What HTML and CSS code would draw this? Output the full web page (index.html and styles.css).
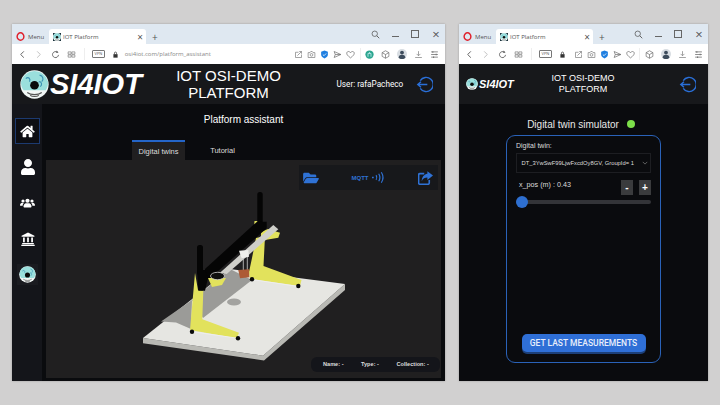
FILE: index.html
```html
<!DOCTYPE html>
<html lang="en">
<head>
    <meta charset="UTF-8">
    <meta name="viewport" content="width=device-width, initial-scale=1.0">
    <title>IOT Platform</title>
    <link rel="stylesheet" href="styles.css">
</head>
<body>
    <!-- shared icons -->
    <svg class="defs" width="0" height="0">
        <symbol id="i-logo" viewBox="0 0 40 40">
            <circle cx="20" cy="20" r="19.5" fill="#f2f7f6"/>
            <path d="M1.5 16a19 19 0 0 1 37 0c.6 5-1 9-3 12H5c-2.500-3-4-7-3.500-12z" fill="#9adfdc"/>
            <path d="M8 12c4-4 7 1 5 4M27 7c5 1 6 6 3 9M26 16c4 0 5 4 2 7" fill="none" stroke="#3d93b5" stroke-width="1.600"/>
            <path d="M10 31c5 4 15 4 20 0M14 35c3 2 9 2 12 0" fill="none" stroke="#555" stroke-width="1.500"/>
            <circle cx="20" cy="21" r="6" fill="#0b0b0b"/>
        </symbol>
        <symbol id="i-logout" viewBox="0 0 24 24">
            <path d="M6 6.500A10 10 0 1 1 6 17.500" fill="none" stroke="currentColor" stroke-width="2"/>
            <path d="M16 12H3M7 8l-4.500 4L7 16" fill="none" stroke="currentColor" stroke-width="2"/>
        </symbol>
        <symbol id="i-opera" viewBox="0 0 16 16">
            <ellipse cx="8" cy="8" rx="6" ry="6.500" fill="none" stroke="#e0202c" stroke-width="2.600"/>
        </symbol>
        <symbol id="i-search" viewBox="0 0 12 12">
            <circle cx="5" cy="5" r="3.600" fill="none" stroke="#555" stroke-width="1"/>
            <path d="M7.700 7.700L11 11" stroke="#555" stroke-width="1.200"/>
        </symbol>
        <symbol id="i-back" viewBox="0 0 10 10"><path d="M6.500 1.500L3 5l3.500 3.500" fill="none" stroke="currentColor" stroke-width="1"/></symbol>
        <symbol id="i-fwd" viewBox="0 0 10 10"><path d="M3.500 1.500L7 5 3.500 8.500" fill="none" stroke="currentColor" stroke-width="1"/></symbol>
        <symbol id="i-reload" viewBox="0 0 12 12">
            <path d="M10 6.500A4 4 0 1 1 8.500 3" fill="none" stroke="#555" stroke-width="1.100"/>
            <path d="M7.500 .8l2.500 2.400-3 .8z" fill="#555"/>
        </symbol>
        <symbol id="i-grid" viewBox="0 0 12 12">
            <path d="M1.500 2.500h4v3h-4zM6.500 2.500h4v3h-4zM1.500 6.500h4v3h-4zM6.500 6.500h4v3h-4z" fill="none" stroke="#777" stroke-width=".9"/>
        </symbol>
        <symbol id="i-lock" viewBox="0 0 10 10">
            <path d="M2 4.500h6v5H2z" fill="#333"/>
            <path d="M3.500 4.500V3a1.500 1.500 0 0 1 3 0v1.500" fill="none" stroke="#333"/>
        </symbol>
        <symbol id="i-snap" viewBox="0 0 12 12">
            <path d="M2 10V3h4M2 10h8V6M4.500 7.500L10 2M7 2h3v3" fill="none" stroke="#777" stroke-width=".9"/>
        </symbol>
        <symbol id="i-cam" viewBox="0 0 12 12">
            <path d="M1.500 3.500h2.500l1-1.500h2l1 1.500h2.500v6.500h-9z" fill="none" stroke="#777" stroke-width=".9"/>
            <circle cx="6" cy="6.500" r="1.800" fill="none" stroke="#777" stroke-width=".9"/>
        </symbol>
        <symbol id="i-shield" viewBox="0 0 12 12">
            <path d="M6 .8l4.500 1.500v4c0 2.500-2.500 4-4.500 5-2-1-4.500-2.500-4.500-5v-4z" fill="#1f7fe0"/>
            <path d="M3.800 6l1.600 1.600 2.800-3" fill="none" stroke="#fff" stroke-width="1"/>
        </symbol>
        <symbol id="i-send" viewBox="0 0 12 12">
            <path d="M1.500 2l9 4-9 4 1.500-4zM3 6h7" fill="none" stroke="#666" stroke-width=".9"/>
        </symbol>
        <symbol id="i-heart" viewBox="0 0 12 12">
            <path d="M6 10.500C2 7.500 1 6 1 4.300 1 2.800 2.200 2 3.400 2 4.500 2 5.500 2.700 6 3.600 6.500 2.700 7.500 2 8.600 2 9.800 2 11 2.800 11 4.300 11 6 10 7.500 6 10.500z" fill="none" stroke="#666" stroke-width=".9"/>
        </symbol>
        <symbol id="i-ext" viewBox="0 0 12 12">
            <circle cx="6" cy="6" r="5.500" fill="#2ba58f"/>
            <path d="M4 9V4.500h4V9M6 4.500V2.800" fill="none" stroke="#c9eef0" stroke-width="1.100"/>
        </symbol>
        <symbol id="i-cube" viewBox="0 0 12 12">
            <path d="M6 1l4.500 2.500v5L6 11 1.500 8.500v-5zM1.500 3.500L6 6l4.500-2.500M6 6v5" fill="none" stroke="#666" stroke-width=".9"/>
        </symbol>
        <symbol id="i-avatar" viewBox="0 0 12 12">
            <circle cx="6" cy="6" r="6" fill="#d8dde2"/>
            <circle cx="6" cy="4.300" r="2.300" fill="#3d4c5c"/>
            <path d="M1.800 10.500C2.300 7.800 4 7 6 7s3.700.8 4.200 3.500A6 6 0 0 1 1.800 10.500z" fill="#3d4c5c"/>
        </symbol>
        <symbol id="i-down" viewBox="0 0 12 12">
            <path d="M6 1.500v6M3.500 5.200L6 7.700l2.500-2.500M1.500 10h9" fill="none" stroke="#777" stroke-width=".9"/>
        </symbol>
        <symbol id="i-menu" viewBox="0 0 12 12">
            <path d="M1.500 2.500h9M1.500 6h9M1.500 9.500h9" fill="none" stroke="#777" stroke-width="1.100"/>
            <path d="M3 1.500h1.500v2H3zM7.500 5h1.500v2H7.500zM4 8.500h1.500v2H4z" fill="#777"/>
        </symbol>
        <symbol id="i-home" viewBox="0 0 576 512">
            <path d="M280.37 148.26L96 300.11V464a16 16 0 0 0 16 16l112.06-.29a16 16 0 0 0 15.92-16V368a16 16 0 0 1 16-16h64a16 16 0 0 1 16 16v95.64a16 16 0 0 0 16 16.05L464 480a16 16 0 0 0 16-16V300L295.67 148.26a12.19 12.19 0 0 0-15.3 0zM571.6 251.47L488 182.56V44.05a12 12 0 0 0-12-12h-56a12 12 0 0 0-12 12v72.61L318.47 43a48 48 0 0 0-61 0L4.34 251.47a12 12 0 0 0-1.6 16.9l25.5 31A12 12 0 0 0 45.15 301l235.22-193.74a12.19 12.19 0 0 1 15.3 0L530.9 301a12 12 0 0 0 16.9-1.6l25.5-31a12 12 0 0 0-1.7-16.93z" fill="currentColor"/>
        </symbol>
        <symbol id="i-user" viewBox="0 0 448 512">
            <path d="M224 256c70.7 0 128-57.3 128-128S294.7 0 224 0 96 57.3 96 128s57.3 128 128 128zm89.6 32h-16.7c-22.2 10.2-46.9 16-72.9 16s-50.6-5.800-72.9-16h-16.7C60.200 288 0 348.200 0 422.400V464c0 26.500 21.500 48 48 48h352c26.500 0 48-21.500 48-48v-41.600c0-74.200-60.200-134.400-134.400-134.400z" fill="currentColor"/>
        </symbol>
        <symbol id="i-users" viewBox="0 0 30 20">
            <g fill="currentColor">
                <circle cx="6" cy="6" r="3.200"/><circle cx="24" cy="6" r="3.200"/><circle cx="15" cy="5.500" r="4.200"/>
                <path d="M0 15c0-3.500 2-5.500 4.500-5.500 1.300 0 2.300.4 3 1-1.500 1.300-2.300 3-2.300 5H1.500C.6 15.500 0 15.500 0 15zM30 15c0-3.500-2-5.500-4.500-5.500-1.300 0-2.300.4-3 1 1.500 1.300 2.300 3 2.300 5h3.700c.9 0 1.500 0 1.500-.5z"/>
                <path d="M7 17c0-4 2.500-6.500 5-6.500h6c2.500 0 5 2.500 5 6.500 0 1.500-1 2-2 2H9c-1 0-2-.5-2-2z"/>
            </g>
        </symbol>
        <symbol id="i-bank" viewBox="0 0 24 24">
            <g fill="currentColor">
                <path d="M12 1L1 6.500V8h22V6.500z"/>
                <path d="M3.500 9.500h3v8h-3zM10.500 9.500h3v8h-3zM17.500 9.500h3v8h-3z"/>
                <path d="M2 19h20v1.800H2zM.5 22h23v2H.5z"/>
            </g>
        </symbol>
        <symbol id="i-folder" viewBox="0 0 576 512">
            <path d="M572.694 292.093L500.27 416.248A63.997 63.997 0 0 1 444.989 448H45.025c-18.523 0-30.064-20.093-20.731-36.093l72.424-124.155A64 64 0 0 1 152 256h399.964c18.523 0 30.064 20.093 20.73 36.093zM152 224h328v-48c0-26.51-21.49-48-48-48H272l-64-64H48C21.49 64 0 85.49 0 112v278.046l69.077-118.418C86.214 242.25 117.989 224 152 224z" fill="currentColor"/>
        </symbol>
        <symbol id="i-waves" viewBox="0 0 24 20">
            <path d="M0 10h3" stroke="currentColor" stroke-width="2.500"/>
            <path d="M7 6c1.500 2.500 1.500 5.500 0 8M11.500 3.500c2.500 4 2.500 9 0 13M16 1c3.500 5.500 3.500 12.500 0 18" fill="none" stroke="currentColor" stroke-width="2"/>
        </symbol>
        <symbol id="i-share" viewBox="0 0 24 22">
            <path d="M10 4H3a2 2 0 0 0-2 2v13a2 2 0 0 0 2 2h13a2 2 0 0 0 2-2v-5" fill="none" stroke="currentColor" stroke-width="2.600"/>
            <path d="M15 0l9 7-9 7V10c-4 0-7 1-9 6 0-6 3-11 9-12z" fill="currentColor"/>
        </symbol>
    </svg>

    <div class="desktop">
        <!-- desktop window -->
        <div class="window window-wide">
            <div class="tabbar">
                <div class="tab-menu"><svg class="ico"><use href="#i-opera"/></svg><span>Menu</span></div>
                <div class="tab-active">
                    <svg class="favicon"><use href="#i-logo"/></svg>
                    <span>IOT Platform</span>
                    <span class="tab-close">×</span>
                </div>
                <span class="tab-plus">+</span>
                <div class="win-controls">
                    <svg class="ico"><use href="#i-search"/></svg>
                    <span class="win-min"></span>
                    <span class="win-max"></span>
                    <span class="win-close">×</span>
                </div>
            </div>
            <div class="toolbar">
                <svg class="ico nav-dark"><use href="#i-back"/></svg>
                <svg class="ico nav-light"><use href="#i-fwd"/></svg>
                <svg class="ico"><use href="#i-reload"/></svg>
                <svg class="ico"><use href="#i-grid"/></svg>
                <span class="sep"></span>
                <span class="vpn">VPN</span>
                <svg class="ico lock"><use href="#i-lock"/></svg>
                <span class="url">osi4iot.com/platform_assistant</span>
                <div class="tool-right">
                    <div class="tool-group">
                        <svg class="ico"><use href="#i-snap"/></svg>
                        <svg class="ico"><use href="#i-cam"/></svg>
                        <svg class="ico"><use href="#i-shield"/></svg>
                        <svg class="ico"><use href="#i-send"/></svg>
                        <svg class="ico"><use href="#i-heart"/></svg>
                    </div>
                    <span class="sep"></span>
                    <div class="tool-group tool-group-wide">
                        <svg class="ico"><use href="#i-ext"/></svg>
                        <svg class="ico"><use href="#i-cube"/></svg>
                        <svg class="ico ico-avatar"><use href="#i-avatar"/></svg>
                        <svg class="ico"><use href="#i-down"/></svg>
                        <svg class="ico"><use href="#i-menu"/></svg>
                    </div>
                </div>
            </div>
            <header class="app-header">
                <div class="brand">
                    <svg class="brand-disc"><use href="#i-logo"/></svg>
                    <span class="brand-name">SI4IOT</span>
                </div>
                <div class="app-title">IOT OSI-DEMO<br>PLATFORM</div>
                <div class="user-name">User: rafaPacheco</div>
                <svg class="logout"><use href="#i-logout"/></svg>
            </header>
            <div class="app-body">
                <nav class="sidebar">
                    <a class="side-item side-active"><svg class="side-home"><use href="#i-home"/></svg></a>
                    <a class="side-item"><svg class="side-user"><use href="#i-user"/></svg></a>
                    <a class="side-item"><svg class="side-users"><use href="#i-users"/></svg></a>
                    <a class="side-item"><svg class="side-bank"><use href="#i-bank"/></svg></a>
                    <a class="side-item side-logo"><svg class="side-disc"><use href="#i-logo"/></svg></a>
                </nav>
                <main class="main">
                    <h1 class="main-title">Platform assistant</h1>
                    <div class="tabs">
                        <div class="tab tab-on">Digital twins</div>
                        <div class="tab">Tutorial</div>
                    </div>
                    <div class="scene">
                        <!-- viewBox is in page pixels -->
                        <svg class="scene-svg" viewBox="46 160 395 218">
                            <!-- plate -->
                            <polygon points="143,338 263,355.7 345,284 345,290 264,360.5 143,343.3" fill="#b9b9b4"/>
                            <polygon points="143,338 263,355.7 345,284 230,269" fill="#e6e6e2"/>
                            <!-- shadows -->
                            <polygon points="161,321.5 192,300 191,329 176,322.5" fill="#9b9b98"/>
                            <polygon points="192,300 230,269 252,280 203,318" fill="#9b9b98"/>
                            <ellipse cx="234" cy="302" rx="7" ry="3.5" fill="#a3a3a0"/>
                            <!-- back stand -->
                            <polygon points="254.5,221 258,221 258,230 254,227" fill="#e2e25c"/>
                            <polygon points="261,232 268,229 280,232.7 278.3,237.7 265,240 261,236" fill="#e2e25c"/>
                            <polygon points="256,238 265,236 263.5,266 301.5,280 300,286 250,279 249,272 252,258" fill="#e2e25c"/>
                            <line x1="252" y1="279.5" x2="298" y2="286.5" stroke="#eee"/>
                            <!-- back post and beam -->
                            <rect x="257.3" y="192" width="5.4" height="32" rx="2.5" fill="#050505"/>
                            <polygon points="205,269 257,221.7 266.7,221.7 266.7,228.3 210,278.3 205,281" fill="#050505"/>
                            <!-- bracket and pulley at the near end -->
                            <polygon points="208,278 226,278 222,285 212,287" fill="#e2e25c"/>
                            <ellipse cx="217.5" cy="276" rx="7" ry="3.7" fill="#0f0f0f" stroke="#cfcfcf" stroke-width=".8"/>
                            <!-- rail -->
                            <polygon points="220,272.7 273.3,225 278.3,229.3 226.7,274" fill="#cfcfca"/>
                            <!-- carriage and brick -->
                            <polygon points="239,250.7 248.3,250 249,256.7 241.7,258.3" fill="#efefec"/>
                            <line x1="243.3" y1="258" x2="243.3" y2="270.5" stroke="#cfcfcf" stroke-width=".8"/>
                            <line x1="247.3" y1="257" x2="247.3" y2="270" stroke="#cfcfcf" stroke-width=".8"/>
                            <polygon points="238.3,270 249,269.3 249.3,277.3 240,278.3" fill="#ad5a35"/>
                            <!-- front stand -->
                            <polygon points="195,273 198,290 203.3,290.7 202.3,319.3 239,332.7 236.7,338.3 190,330" fill="#e2e25c"/>
                            <line x1="192" y1="331.7" x2="238" y2="338.3" stroke="#eee"/>
                            <!-- front post -->
                            <rect x="197" y="245" width="6" height="30" rx="2.5" fill="#050505"/>
                            <polygon points="197,270 205,270 208,278 205,290.7 198.3,290.7" fill="#050505"/>
                            <!-- feet -->
                            <circle cx="192" cy="331.7" r="2.2" fill="#0a0a0a"/>
                            <circle cx="238" cy="338.3" r="2.2" fill="#0a0a0a"/>
                            <circle cx="252" cy="279.3" r="2.2" fill="#0a0a0a"/>
                            <circle cx="298.3" cy="286" r="2.2" fill="#0a0a0a"/>
                        </svg>
                        <div class="scene-tools">
                            <svg class="tool-folder"><use href="#i-folder"/></svg>
                            <div class="tool-mqtt"><span>MQTT</span><svg class="tool-waves"><use href="#i-waves"/></svg></div>
                            <svg class="tool-share"><use href="#i-share"/></svg>
                        </div>
                        <div class="scene-info">
                            <span>Name: -</span>
                            <span>Type: -</span>
                            <span>Collection: -</span>
                        </div>
                    </div>
                </main>
            </div>
        </div>

        <!-- mobile window -->
        <div class="window window-narrow">
            <div class="tabbar">
                <div class="tab-menu"><svg class="ico"><use href="#i-opera"/></svg><span>Menu</span></div>
                <div class="tab-active">
                    <svg class="favicon"><use href="#i-logo"/></svg>
                    <span>IOT Platform</span>
                    <span class="tab-close">×</span>
                </div>
                <span class="tab-plus">+</span>
                <div class="win-controls">
                    <svg class="ico"><use href="#i-search"/></svg>
                    <span class="win-min"></span>
                    <span class="win-max"></span>
                    <span class="win-close">×</span>
                </div>
            </div>
            <div class="toolbar">
                <svg class="ico nav-dark"><use href="#i-back"/></svg>
                <svg class="ico nav-light"><use href="#i-fwd"/></svg>
                <svg class="ico"><use href="#i-reload"/></svg>
                <svg class="ico"><use href="#i-grid"/></svg>
                <span class="sep"></span>
                <span class="vpn">VPN</span>
                <svg class="ico lock"><use href="#i-lock"/></svg>
                <div class="tool-right">
                    <div class="tool-group">
                        <svg class="ico"><use href="#i-snap"/></svg>
                        <svg class="ico"><use href="#i-cam"/></svg>
                        <svg class="ico"><use href="#i-shield"/></svg>
                        <svg class="ico"><use href="#i-send"/></svg>
                        <svg class="ico"><use href="#i-heart"/></svg>
                    </div>
                    <span class="sep"></span>
                    <div class="tool-group tool-group-wide">
                        <svg class="ico"><use href="#i-cube"/></svg>
                        <svg class="ico ico-avatar"><use href="#i-avatar"/></svg>
                        <svg class="ico"><use href="#i-down"/></svg>
                        <svg class="ico"><use href="#i-menu"/></svg>
                    </div>
                </div>
            </div>
            <header class="app-header app-header-small">
                <div class="brand">
                    <svg class="brand-disc"><use href="#i-logo"/></svg>
                    <span class="brand-name">SI4IOT</span>
                </div>
                <div class="app-title">IOT OSI-DEMO<br>PLATFORM</div>
                <svg class="logout"><use href="#i-logout"/></svg>
            </header>
            <div class="sim-body">
                <div class="sim-heading">
                    <span>Digital twin simulator</span>
                    <span class="sim-dot"></span>
                </div>
                <section class="sim-panel">
                    <div class="sim-label">Digital twin:</div>
                    <div class="sim-select">
                        <span>DT_3YwSwF99LjwFxcdOy8GV, GroupId= 1</span>
                        <svg class="sim-chevron" viewBox="0 0 8 5"><path d="M1 1l3 3 3-3" fill="none" stroke="#999" stroke-width=".8"/></svg>
                    </div>
                    <div class="sim-row">
                        <span>x_pos (m) : 0.43</span>
                        <div class="sim-steps">
                            <span class="step">-</span>
                            <span class="step">+</span>
                        </div>
                    </div>
                    <div class="slider"><span class="slider-thumb"></span></div>
                    <button class="sim-button">GET LAST MEASUREMENTS</button>
                </section>
            </div>
        </div>
    </div>
</body>
</html>
```

FILE: styles.css
```css
body {
    margin: 0;
    background-color: #d1d0d0;
    font-family: "Liberation Sans", Arial, sans-serif;
    color: #fff;
}
.defs {
    display: block;
    height: 0;
}
.desktop {
    display: flex;
    gap: 14px;
    padding: 24px 12px;
    height: 357px;
}
.window {
    display: flex;
    flex-direction: column;
    background-color: #0a0b0e;
    box-shadow: 0 0 2px rgba(0, 0, 0, 0.25);
}
.window-wide {
    width: 433px;
}
.window-narrow {
    width: 249px;
}

/* browser chrome */
.tabbar {
    display: flex;
    align-items: flex-end;
    height: 20px;
    background-color: #dfe8f1;
    font-family: "Open Sans", sans-serif;
    font-size: 6px;
    color: #555;
}
.tab-menu {
    display: flex;
    align-items: center;
    gap: 3px;
    width: 37px;
    height: 15px;
    padding-left: 4px;
    box-sizing: border-box;
}
.tab-active {
    display: flex;
    align-items: center;
    gap: 2px;
    width: 97px;
    height: 15px;
    padding: 0 3px 0 4px;
    box-sizing: border-box;
    background-color: #fff;
    border-radius: 3px 3px 0 0;
}
.favicon {
    width: 8px;
    height: 8px;
    background-color: #17303a;
}
.tab-close {
    margin-left: auto;
    font-size: 10px;
    line-height: 10px;
}
.tab-plus {
    margin-left: 6px;
    align-self: center;
    padding-top: 6px;
    font-size: 10px;
}
.win-controls {
    display: flex;
    align-items: center;
    gap: 9px;
    margin-left: auto;
    height: 20px;
    padding-right: 4px;
}
.win-min {
    width: 7px;
    height: 1px;
    margin: 4px 0 0 3px;
    background-color: #666;
}
.win-max {
    width: 6px;
    height: 6px;
    margin: 0 3px;
    border: 1px solid #666;
}
.win-close {
    font-size: 13px;
    line-height: 13px;
    width: 10px;
    text-align: center;
}
.ico {
    flex: none;
    width: 9px;
    height: 9px;
}
.toolbar {
    display: flex;
    align-items: center;
    gap: 7.4px;
    height: 20px;
    padding-left: 6px;
    background-color: #fff;
    font-family: "Open Sans", sans-serif;
    color: #555;
}
.nav-light {
    color: #bbb;
}
.sep {
    flex: none;
    width: 1px;
    height: 12px;
    background-color: #eee;
}
.vpn {
    flex: none;
    width: 11px;
    height: 6px;
    border: 1px solid #777;
    border-radius: 1px;
    font-size: 4px;
    line-height: 6px;
    text-align: center;
}
.lock {
    width: 7px;
    height: 7px;
}
.url {
    margin-left: -2px;
    font-size: 6px;
    color: #888;
}
.tool-right {
    display: flex;
    align-items: center;
    gap: 4.5px;
    margin-left: auto;
    padding-right: 6px;
}
.tool-group {
    display: flex;
    align-items: center;
    gap: 4px;
}
.tool-group-wide {
    gap: 7px;
}
.ico-avatar {
    width: 10px;
    height: 10px;
}

/* app header */
.app-header {
    display: flex;
    align-items: center;
    height: 40px;
    padding: 0 12px 0 8px;
    background-color: #17181b;
    flex: none;
}
.brand {
    display: flex;
    align-items: center;
    gap: 1px;
    width: 135.5px;
}
.brand-disc {
    width: 29px;
    height: 29px;
}
.brand-name {
    font-size: 29px;
    font-weight: bold;
    font-style: italic;
    line-height: 30px;
}
.app-title {
    width: 146px;
    font-size: 15px;
    line-height: 17px;
    text-align: center;
}
.user-name {
    margin-left: 35px;
    font-family: Roboto, sans-serif;
    font-size: 8.2px;
    white-space: nowrap;
}
.logout {
    width: 17px;
    height: 17px;
    margin-left: auto;
    color: #2a6fd8;
}
.app-header-small .brand {
    width: 50px;
}
.app-header-small {
    padding: 0 12px 0 7px;
}
.app-header-small .brand-disc {
    width: 12px;
    height: 12px;
}
.app-header-small .brand-name {
    font-size: 11px;
}
.app-header-small .app-title {
    width: 120px;
    margin-left: 7px;
    font-size: 9px;
    line-height: 11px;
}

/* platform assistant */
.app-body {
    display: flex;
    flex: 1;
    min-height: 0;
}
.sidebar {
    display: flex;
    flex-direction: column;
    gap: 10px;
    width: 30px;
    padding: 14px 0 0 3px;
    box-sizing: border-box;
    background-color: #14151a;
}
.side-item {
    display: flex;
    align-items: center;
    justify-content: center;
    width: 25px;
    height: 26px;
    color: #fff;
    box-sizing: border-box;
}
.side-active {
    border: 1px solid #1c3a70;
    background-color: #0d0e13;
}
.side-home {
    width: 15px;
    height: 13px;
}
.side-user {
    width: 14px;
    height: 16px;
}
.side-users {
    width: 15px;
    height: 10px;
}
.side-bank {
    width: 14px;
    height: 14px;
}
.side-logo {
    width: 21px;
    height: 21px;
    margin: 2px 0 0 2px;
    background-color: #1a1b20;
}
.side-disc {
    width: 17px;
    height: 17px;
}
.main {
    display: flex;
    flex-direction: column;
    flex: 1;
    min-width: 0;
    padding: 0 4px 3px;
}
.main-title {
    margin: 9px 0 0;
    font-size: 10px;
    font-weight: normal;
    line-height: 14px;
    text-align: center;
}
.tabs {
    display: flex;
    margin: 13px 0 0 86px;
    font-family: "Liberation Sans", sans-serif;
    font-size: 7.5px;
    color: #ddd;
}
.tab {
    width: 53px;
    height: 20px;
    line-height: 21px;
    text-align: center;
    box-sizing: border-box;
}
.tab + .tab {
    margin-left: 11px;
}
.tab-on {
    border-top: 2px solid #2465c8;
    line-height: 19px;
    background-color: #201f20;
}
.scene {
    position: relative;
    flex: 1;
    background-color: #201f20;
    overflow: hidden;
}
.scene-svg {
    display: block;
    width: 100%;
    height: 100%;
}
.scene-tools {
    position: absolute;
    top: 5px;
    right: 3px;
    display: flex;
    align-items: center;
    justify-content: space-between;
    width: 139px;
    height: 25px;
    padding: 0 5px 0 4px;
    box-sizing: border-box;
    background-color: #17181b;
    color: #2f72d6;
}
.tool-folder {
    width: 16px;
    height: 14px;
}
.tool-mqtt {
    display: flex;
    align-items: center;
    gap: 3px;
    font-size: 6px;
    font-weight: bold;
}
.tool-waves {
    width: 14px;
    height: 13px;
}
.tool-share {
    width: 15px;
    height: 14px;
}
.scene-info {
    position: absolute;
    right: 1px;
    bottom: 6px;
    display: flex;
    width: 129px;
    height: 15px;
    padding-left: 12px;
    box-sizing: border-box;
    border-radius: 6px;
    background-color: #14151a;
    font-size: 5.6px;
    font-weight: bold;
    line-height: 15px;
    color: #ddd;
}
.scene-info span:nth-child(1) {
    width: 38px;
}
.scene-info span:nth-child(2) {
    width: 35.5px;
}

/* simulator */
.sim-body {
    display: flex;
    flex-direction: column;
    flex: 1;
    min-height: 0;
    align-items: center;
}
.sim-heading {
    display: flex;
    align-items: center;
    gap: 8px;
    margin: 12px 0 3px -5px;
    height: 16px;
    font-size: 10px;
    color: #e8e8e8;
}
.sim-dot {
    width: 8px;
    height: 8px;
    border-radius: 50%;
    background-color: #7de04a;
}
.sim-panel {
    display: flex;
    flex-direction: column;
    width: 155px;
    height: 228px;
    padding: 6px 9px 10px;
    box-sizing: border-box;
    border: 1.5px solid #2a62b8;
    border-radius: 9px;
    font-size: 7px;
    color: #ddd;
}
.sim-label {
    line-height: 8px;
}
.sim-select {
    display: flex;
    align-items: center;
    justify-content: space-between;
    height: 18px;
    margin-top: 3px;
    padding: 0 2px 0 4.5px;
    border: 1px solid #1d1e22;
    font-size: 5.8px;
    white-space: nowrap;
    overflow: hidden;
}
.sim-chevron {
    flex: none;
    width: 6px;
    height: 4px;
}
.sim-row {
    display: flex;
    align-items: flex-start;
    justify-content: space-between;
    margin-top: 7px;
    padding-left: 3px;
    font-size: 7.2px;
}
.sim-steps {
    display: flex;
    gap: 6px;
}
.step {
    width: 12px;
    height: 15px;
    background-color: #3a3b3d;
    font-size: 10px;
    font-weight: bold;
    line-height: 15px;
    text-align: center;
    color: #fff;
}
.slider {
    position: relative;
    height: 4px;
    margin-top: 5px;
    border-radius: 2px;
    background-color: #333438;
}
.slider-thumb {
    position: absolute;
    left: 0;
    top: -4px;
    width: 12px;
    height: 12px;
    border-radius: 50%;
    background-color: #2e6fd0;
}
.sim-button {
    align-self: center;
    width: 124px;
    height: 18px;
    margin-top: auto;
    padding: 0;
    border: 0;
    border-radius: 5px;
    background-color: #2f6fd6;
    box-shadow: 0 2px 0 #1c3f78;
    font-family: Roboto, sans-serif;
    font-size: 8.5px;
    font-weight: 500;
    color: #e8eefa;
}
```
